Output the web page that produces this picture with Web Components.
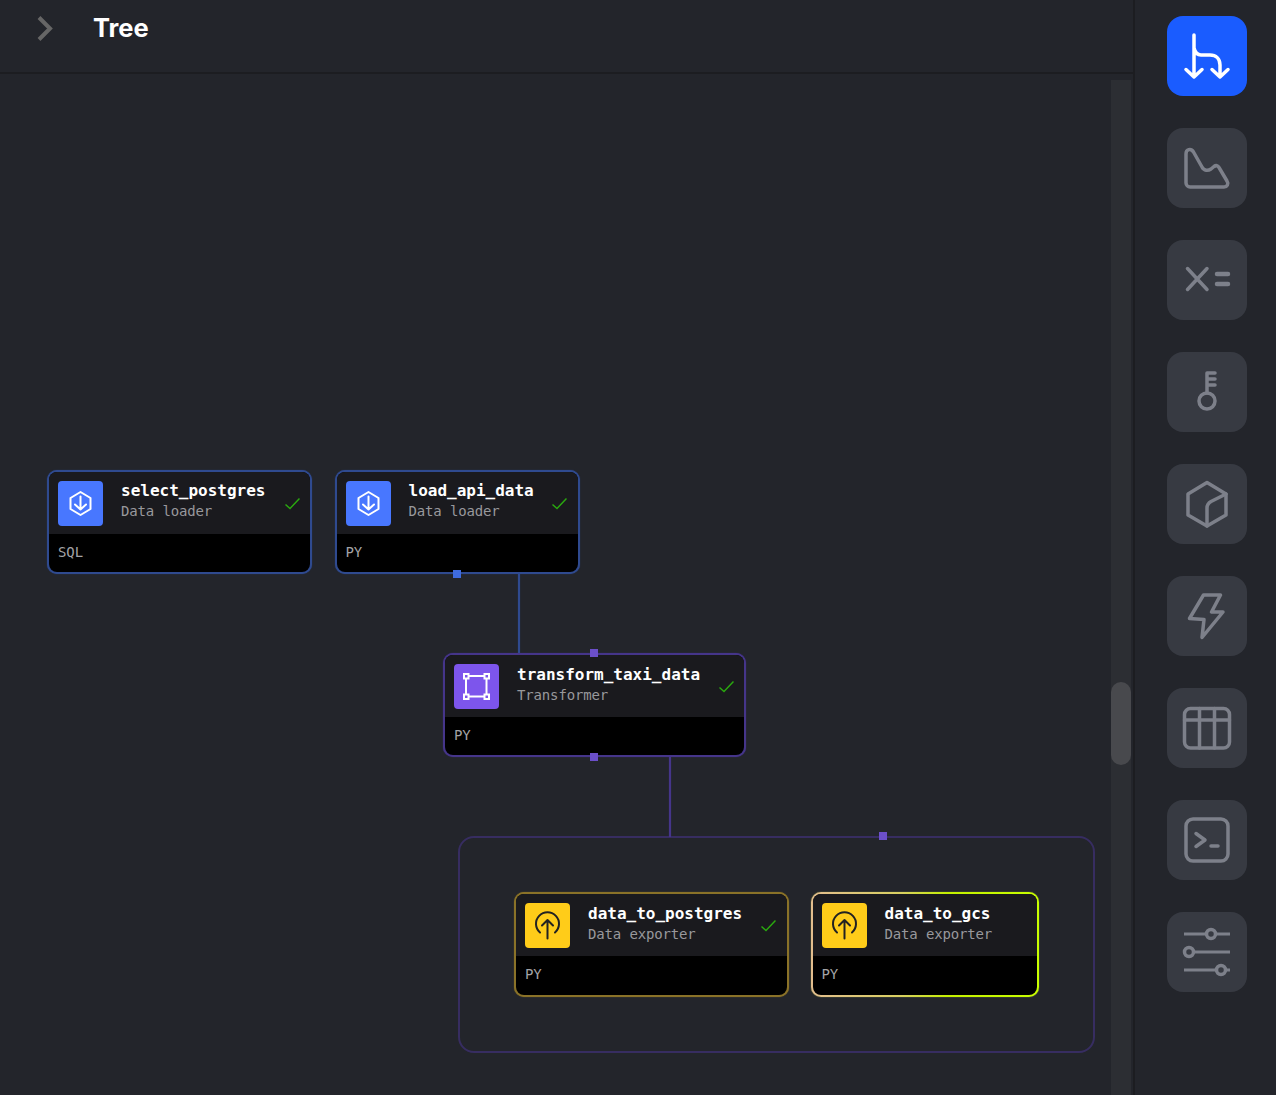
<!DOCTYPE html>
<html lang="en">
<head>
<meta charset="utf-8">
<title>Tree</title>
<style>
  html, body { margin: 0; height: 100%; background: #23252b; overflow: hidden; }
  body { font-family: "Inter", "Liberation Sans", sans-serif; }
</style>
</head>
<body>
<tree-app>
  <tree-header slot="header">Tree</tree-header>

  <graph-canvas slot="canvas">
    <graph-group style="left:458px;top:763px;width:637px;height:217px"></graph-group>

    <graph-edge style="left:518px;top:501px;height:80px;color:#2f4a8f"></graph-edge>
    <graph-edge style="left:669px;top:684px;height:80px;color:#45358a"></graph-edge>

    <pipeline-node kind="loader" style="left:47px;top:397px;width:265px;--pad-right:10px">
      select_postgres
      <span slot="sub">Data loader</span>
      <span slot="lang">SQL</span>
    </pipeline-node>
    <pipeline-node kind="loader" style="left:334.500px;top:397px;width:245.500px">
      load_api_data
      <span slot="sub">Data loader</span>
      <span slot="lang">PY</span>
    </pipeline-node>
    <pipeline-node kind="transformer" style="left:443px;top:580px;width:303px;--pad-right:10px">
      transform_taxi_data
      <span slot="sub">Transformer</span>
      <span slot="lang">PY</span>
    </pipeline-node>
    <pipeline-node kind="exporter" style="left:514px;top:819px;width:275px">
      data_to_postgres
      <span slot="sub">Data exporter</span>
      <span slot="lang">PY</span>
    </pipeline-node>
    <pipeline-node kind="exporter" running style="left:810.500px;top:819px;width:228.500px">
      data_to_gcs
      <span slot="sub">Data exporter</span>
      <span slot="lang">PY</span>
    </pipeline-node>

    <graph-pin style="left:453px;top:497px;background:#3f6ce0"></graph-pin>
    <graph-pin style="left:590px;top:576px"></graph-pin>
    <graph-pin style="left:590px;top:680px"></graph-pin>
    <graph-pin style="left:879px;top:759px"></graph-pin>

    <graph-scrollbar></graph-scrollbar>
  </graph-canvas>

  <side-rail slot="rail">
    <rail-button icon="tree" active></rail-button>
    <rail-button icon="chart"></rail-button>
    <rail-button icon="vars"></rail-button>
    <rail-button icon="key"></rail-button>
    <rail-button icon="cube"></rail-button>
    <rail-button icon="bolt"></rail-button>
    <rail-button icon="table"></rail-button>
    <rail-button icon="terminal"></rail-button>
    <rail-button icon="sliders"></rail-button>
  </side-rail>
</tree-app>

<script>
/* Shell: left pane (header + canvas), divider, right rail */
class TreeApp extends HTMLElement {
  constructor() {
    super();
    this.attachShadow({ mode: 'open' });
    this.shadowRoot.innerHTML = `
      <style>
        :host { display: flex; width: 1276px; height: 1095px; background: #23252b; }
        .pane { width: 1133px; display: flex; flex-direction: column; border-right: 2px solid #1c1d21; }
      </style>
      <div class="pane">
        <slot name="header"></slot>
        <slot name="canvas"></slot>
      </div>
      <slot name="rail"></slot>
    `;
  }
}

class TreeHeader extends HTMLElement {
  constructor() {
    super();
    this.attachShadow({ mode: 'open' });
    this.shadowRoot.innerHTML = `
      <style>
        :host {
          display: flex; align-items: center; height: 72px; flex: none;
          border-bottom: 2px solid #1c1d21; box-sizing: content-box; margin-bottom: -1px;
        }
        svg { margin-left: 36px; display: block; }
        h1 { margin: 0 0 17px 39px; font: 700 25.500px/32px "Inter", "Liberation Sans", sans-serif; color: #fff; }
        .wrap { display: flex; align-items: center; }
        svg { margin-bottom: 17px; }
      </style>
      <div class="wrap">
        <svg width="18" height="26" viewBox="0 0 18 26" fill="none">
          <path d="M3 2.500L14 13.500L3 24.500" stroke="#666666" stroke-width="4"/>
        </svg>
        <h1><slot></slot></h1>
      </div>
    `;
  }
}

class GraphCanvas extends HTMLElement {
  constructor() {
    super();
    this.attachShadow({ mode: 'open' });
    this.shadowRoot.innerHTML = `
      <style>
        :host { display: block; position: relative; flex: 1; }
      </style>
      <slot></slot>
    `;
  }
}

class GraphGroup extends HTMLElement {
  constructor() {
    super();
    this.attachShadow({ mode: 'open' });
    this.shadowRoot.innerHTML = `
      <style>
        :host {
          display: block; position: absolute; box-sizing: border-box;
          border: 2px solid #372d61; border-radius: 16px;
        }
      </style>
    `;
  }
}

class GraphEdge extends HTMLElement {
  constructor() {
    super();
    this.attachShadow({ mode: 'open' });
    this.shadowRoot.innerHTML = `
      <style>
        :host { display: block; position: absolute; width: 2px; background: currentColor; box-shadow: 0 0 1px currentColor; }
      </style>
    `;
  }
}

class GraphPin extends HTMLElement {
  constructor() {
    super();
    this.attachShadow({ mode: 'open' });
    this.shadowRoot.innerHTML = `
      <style>:host { display: block; position: absolute; width: 8px; height: 8px; background: #6b4fc9; }</style>
    `;
  }
}

class GraphScrollbar extends HTMLElement {
  constructor() {
    super();
    this.attachShadow({ mode: 'open' });
    this.shadowRoot.innerHTML = `
      <style>
        :host { display: block; position: absolute; left: 1111px; top: 7px; bottom: 0; width: 20px; background: #2c2e33; }
        .thumb { position: absolute; left: 0; right: 0; top: 602px; height: 83px; border-radius: 10px; background: #48494d; }
      </style>
      <div class="thumb"></div>
    `;
  }
}

const NODE_KINDS = {
  loader: {
    color: '#4877ff',
    border: '#2f4a8f',
    textShift: 5,
    icon: `<g fill="none" stroke="#fff" stroke-width="2" stroke-linecap="round" stroke-linejoin="round">
      <path d="M22.500 11L32.500 17V28L22.500 34L12.500 28V17Z"/>
      <path d="M22.500 15.500V28.500M17 23.500L22.500 28.500L28 23.500"/></g>`
  },
  transformer: {
    color: '#7d55ec',
    border: '#45358a',
    textShift: 3,
    icon: `<g fill="none" stroke="#fff" stroke-width="2">
      <path d="M14.500 12H30.500M14.500 32.500H30.500M12 14.500V30M32.500 14.500V30"/>
      <rect x="10" y="10" width="4.500" height="4.500"/><rect x="30.500" y="10" width="4.500" height="4.500"/>
      <rect x="10" y="30.500" width="4.500" height="4.500"/><rect x="30.500" y="30.500" width="4.500" height="4.500"/></g>`
  },
  exporter: {
    color: '#ffcc19',
    border: '#8a7228',
    textShift: 3,
    icon: `<g fill="none" stroke="#222" stroke-width="2" stroke-linecap="round" stroke-linejoin="round">
      <path d="M15 29.500A11.500 11.500 0 1 1 30 29.500"/>
      <path d="M22.500 35.500V17M17 22.500L22.500 17L28 22.500"/></g>`
  }
};

/* Block in the pipeline graph: default slot is the name */
class PipelineNode extends HTMLElement {
  constructor() {
    super();
    this.attachShadow({ mode: 'open' });
  }

  connectedCallback() {
    const kindName = this.getAttribute('kind');
    const kind = NODE_KINDS[kindName];
    const running = this.hasAttribute('running');
    const border = running
      ? 'linear-gradient(90deg, #e2bd8e 0%, #d8d060 40%, #c4f000 60%, #c8ff00 100%)'
      : kind.border;
    const glow = running ? '#c8d850' : kind.border;
    this.shadowRoot.innerHTML = `
      <style>
        :host {
          display: block; position: absolute; box-sizing: border-box; padding: 2px;
          border-radius: 10px; background: ${border}; box-shadow: 0 0 1px ${glow};
          font-family: "DejaVu Sans Mono", monospace;
        }
        .inner { border-radius: 8px; overflow: hidden; background: #000; }
        .top { display: flex; align-items: center; height: 62px; box-sizing: border-box; padding: 9px var(--pad-right, 11px) 8px 9px; background: #1a1a1e; }
        .icon { width: 45px; height: 45px; flex: none; border-radius: 4px; background: ${kind.color}; }
        .icon svg, .check { display: block; }
        .text { flex: 1; margin-left: 18px; min-width: 0; padding-bottom: ${kind.textShift}px; }
        .name { font-size: 16px; line-height: 20px; font-weight: 700; color: #fff; white-space: nowrap; }
        .sub { font-size: 14px; line-height: 20px; letter-spacing: -0.15px; color: #98989c; white-space: nowrap; }
        .lang { height: ${kindName === 'exporter' ? 39 : 38}px; box-sizing: border-box; padding: 8px 9px 0; font-size: 14px; line-height: 20px; letter-spacing: -0.1px; color: #a3a3a6; }
      </style>
      <div class="inner">
        <div class="top">
          <div class="icon"><svg width="45" height="45" viewBox="0 0 45 45">${kind.icon}</svg></div>
          <div class="text">
            <div class="name"><slot></slot></div>
            <div class="sub"><slot name="sub"></slot></div>
          </div>
          ${running ? '' : `<svg class="check" width="15" height="12" viewBox="0 0 15 12" fill="none">
            <path d="M0.500 6.500L5 10.500L14.500 0.500" stroke="#2aa80f" stroke-width="1.500"/></svg>`}
        </div>
        <div class="lang"><slot name="lang"></slot></div>
      </div>
    `;
  }
}

class SideRail extends HTMLElement {
  constructor() {
    super();
    this.attachShadow({ mode: 'open' });
    this.shadowRoot.innerHTML = `
      <style>
        :host { display: flex; flex-direction: column; gap: 32px; padding: 16px 0 0 32px; }
      </style>
      <slot></slot>
    `;
  }
}

const RAIL_ICONS = {
  tree: `<path d="M27 19V61M19 53.500L27 61L35 53.500M27 32C28 36 30 39 34 39H43C49 39 53 43 53 49V61M45 53.500L53 61L61 53.500"/>`,
  chart: `<path d="M19 26C19 21 24 20 26.500 24L35 39C37 43 41 43 44 41L47 38.500C49 37 51 37.500 52 39.500L60 53C62 56 60 59 57 59H23C21 59 19 57 19 55Z"/>`,
  vars: `<path d="M20.500 28.500L40 49.500M40 28.500L20.500 49.500"/><path stroke-width="4.500" stroke-linecap="round" d="M50 34H61M50 44H61"/>`,
  key: `<circle cx="40" cy="49" r="8"/><path d="M40 41V21H48M40 27H48M40 33H48"/>`,
  cube: `<path d="M40 18.500L59 30V51L40 62L21 51V30Z"/><path d="M40 62V44C40 41 41.500 39 44 37.500L59 30"/>`,
  bolt: `<path d="M36.500 19H53.500L44.500 36H56L35 61.500L37 43.500L22.500 42.500Z"/>`,
  table: `<rect x="17.500" y="20.500" width="45" height="39.500" rx="6"/><path d="M17.500 32H62.500M32.500 20.500V60M47.500 20.500V60"/>`,
  terminal: `<rect x="19" y="19" width="42" height="42" rx="7"/><path d="M29 33.500L38 40L29 46.500M44 46H51"/>`,
  sliders: `<path stroke-width="3" stroke-linecap="butt" d="M17 22H63M17 40H63M17 58H63"/>
    <circle cx="44" cy="22" r="4.500" fill="#373a42"/><circle cx="22" cy="40" r="4.500" fill="#373a42"/><circle cx="54" cy="58" r="4.500" fill="#373a42"/>`
};

class RailButton extends HTMLElement {
  constructor() {
    super();
    this.attachShadow({ mode: 'open' });
  }

  connectedCallback() {
    const active = this.hasAttribute('active');
    this.shadowRoot.innerHTML = `
      <style>
        :host {
          display: block; width: 80px; height: 80px; border-radius: 16px;
          background: ${active ? '#1a5cff' : '#373a42'};
        }
        svg { display: block; }
      </style>
      <svg width="80" height="80" viewBox="0 0 80 80" fill="none" stroke="${active ? '#fff' : '#7d808a'}"
        stroke-width="3.500" stroke-linecap="round" stroke-linejoin="round">${RAIL_ICONS[this.getAttribute('icon')]}</svg>
    `;
  }
}

customElements.define('tree-app', TreeApp);
customElements.define('tree-header', TreeHeader);
customElements.define('graph-canvas', GraphCanvas);
customElements.define('graph-group', GraphGroup);
customElements.define('graph-edge', GraphEdge);
customElements.define('graph-pin', GraphPin);
customElements.define('graph-scrollbar', GraphScrollbar);
customElements.define('pipeline-node', PipelineNode);
customElements.define('side-rail', SideRail);
customElements.define('rail-button', RailButton);
</script>
</body>
</html>
